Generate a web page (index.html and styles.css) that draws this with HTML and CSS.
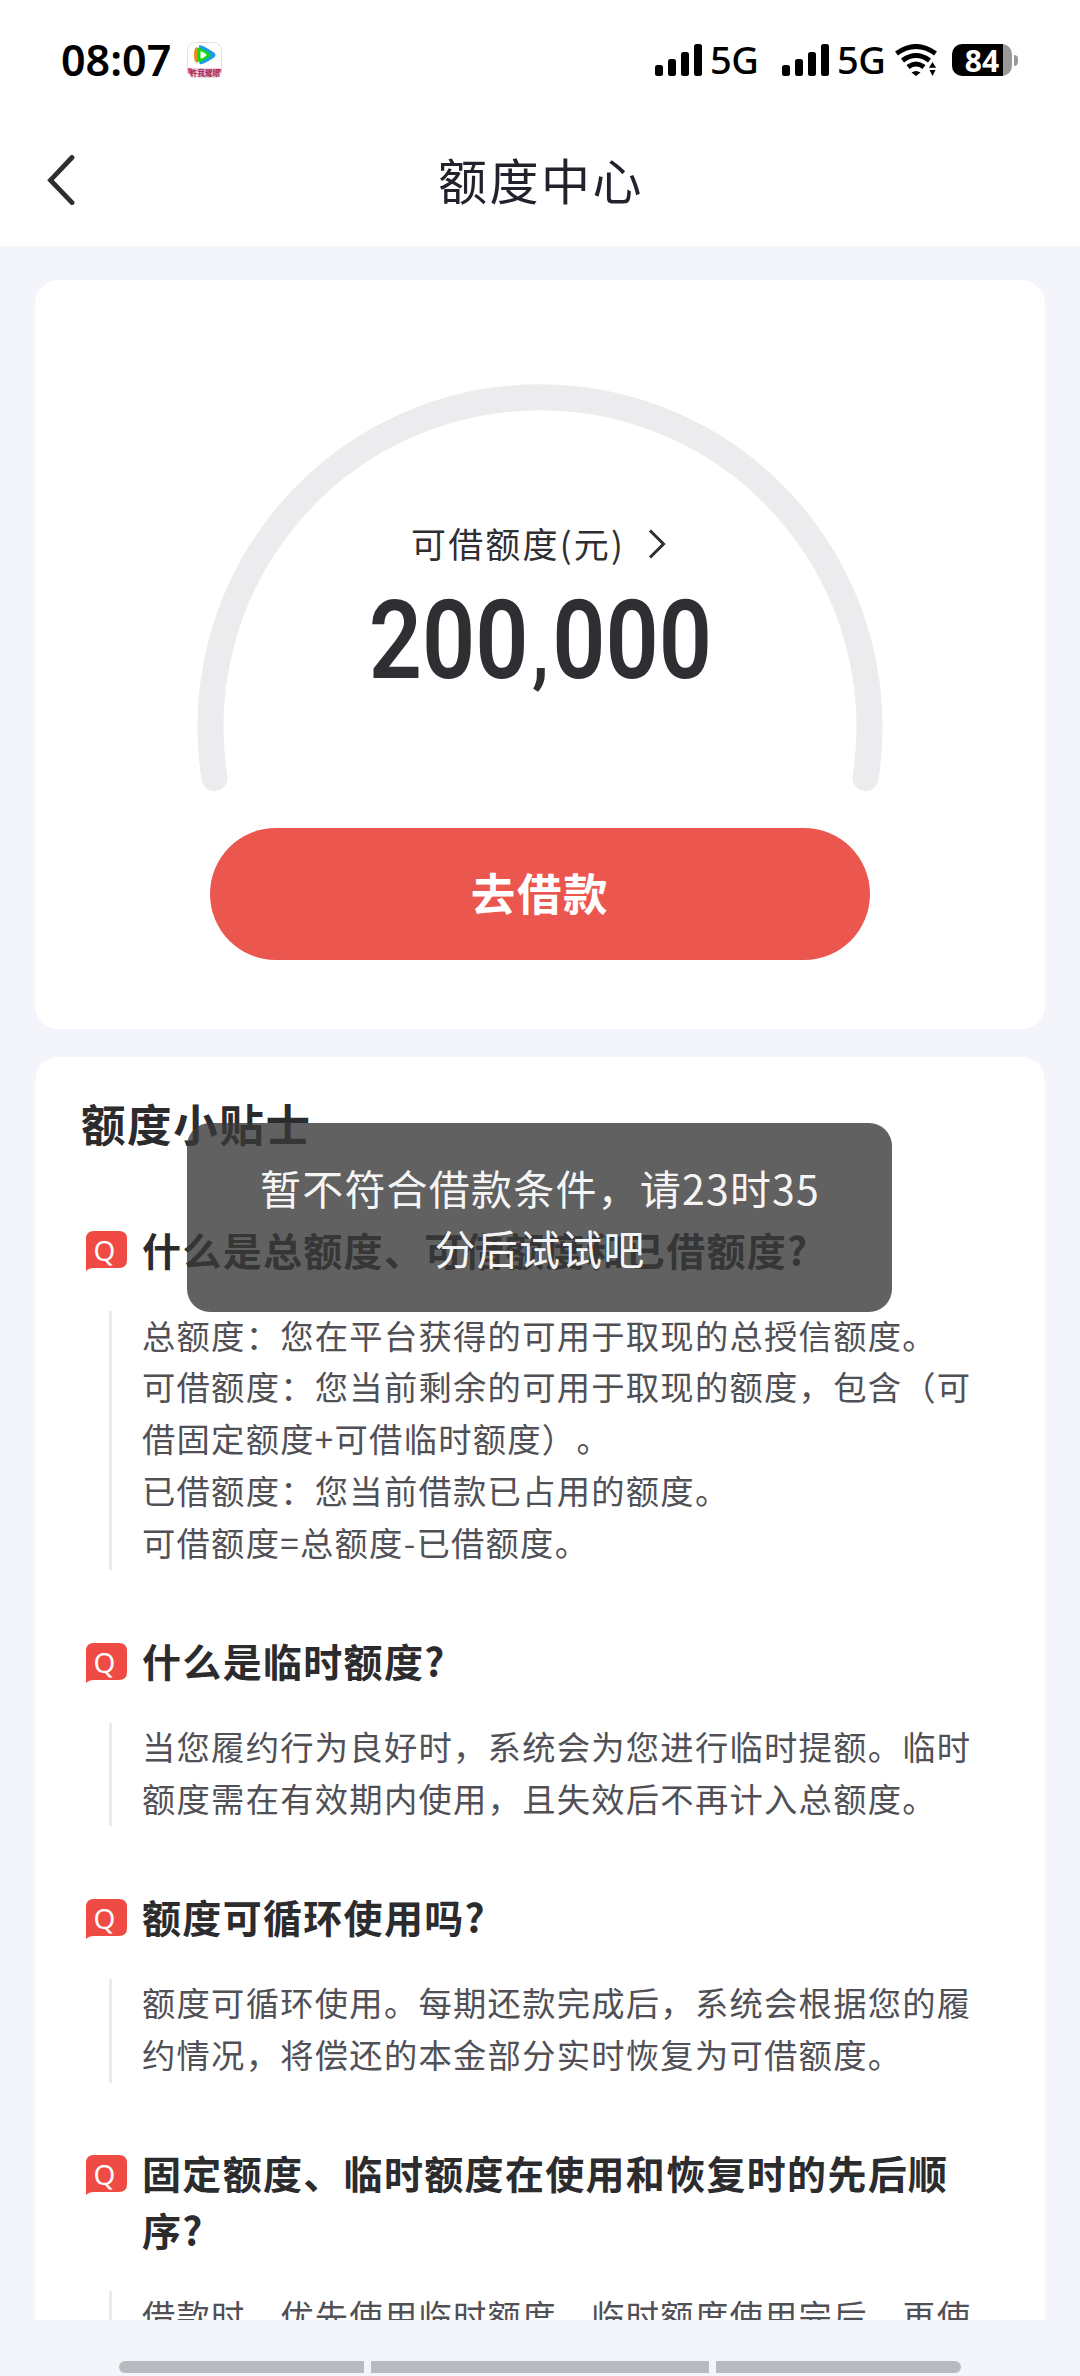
FILE: index.html
```html
<!DOCTYPE html>
<html lang="zh-CN">
<head>
<meta charset="utf-8">
<title>额度中心</title>
<link rel="stylesheet" href="styles.css">
</head>
<body>
<div class="screen">
  <header class="top">
    <div class="status">
      <span class="clock">08:07</span>
      <svg class="app-icon" width="35" height="36" viewBox="0 0 35 36">
        <defs><clipPath id="app"><rect width="35" height="36" rx="8"/></clipPath></defs>
        <g clip-path="url(#app)">
          <rect width="35" height="36" fill="#fff"/>
          <rect y="26" width="35" height="10" fill="#f3cfdb"/>
          <path d="M0 26h4l3 4-3 3-4-2zM28 27h7v4l-4-2z" fill="#d34e78"/>
        </g>
        <rect x=".5" y=".5" width="34" height="35" rx="8" fill="none" stroke="#e4e0e3"/>
        <path d="M9 5.500Q12 3.500 12 13T9.500 20.500Q7 20 7 13T9 5.500z" fill="#f58a1c"/>
        <path d="M12 3.500Q14 2 27 10.500Q30 13 27 15.500Q15 23.500 12.500 22z" fill="#1d9be6"/>
        <path d="M10.500 6Q11.500 4.500 22 11Q25 13 22 15Q12 21.500 10.800 19.500Q9.500 13 10.500 6z" fill="#16d916"/>
        <path d="M13.500 9.300Q14.500 9 19 12Q20 13 19 14Q14.500 17 13.500 16.500z" fill="#fff"/>
        <text x="18" y="33.500" class="app-label">许我耀眼</text>
      </svg>
      <span class="spring"></span>
      <svg class="signal" width="47" height="32" viewBox="0 0 47 32"><rect y="21" width="8" height="11" rx="2.500"/><rect x="13" y="15" width="8" height="17" rx="2.500"/><rect x="26" y="8" width="8" height="24" rx="2.500"/><rect x="39" width="8" height="32" rx="2.500"/></svg>
      <span class="net net-first">5G</span>
      <svg class="signal" width="47" height="32" viewBox="0 0 47 32"><rect y="21" width="8" height="11" rx="2.500"/><rect x="13" y="15" width="8" height="17" rx="2.500"/><rect x="26" y="8" width="8" height="24" rx="2.500"/><rect x="39" width="8" height="32" rx="2.500"/></svg>
      <span class="net">5G</span>
      <svg class="wifi" width="43" height="32" viewBox="0 0 43 32">
        <g fill="none" stroke="#000" stroke-width="5">
          <path d="M1.500 9.500Q21 -4.500 40.500 9.500"/>
          <path d="M7.500 16.500Q21 6.500 34.500 16.500"/>
          <path d="M13 23Q21 17 29 23"/>
        </g>
        <path d="M16.500 28.500q4.500-3 9 0L21 32z"/>
        <path d="M37.500 16.500l5 8h-10z" stroke="#fff" stroke-width="1.500"/>
        <path d="M34.500 26h6l-3 6z"/>
      </svg>
      <div class="battery"><span>84</span></div>
      <i class="battery-tip"></i>
    </div>
    <nav class="nav">
      <svg class="back" width="30" height="50" viewBox="0 0 30 50"><path d="M26 2.500L4.500 25.200l21.500 22.500" /></svg>
      <h1>额度中心</h1>
    </nav>
  </header>

  <main class="page">
    <section class="card quota">
      <div class="gauge">
        <svg class="arc" width="686" height="410" viewBox="0 0 686 410"><path d="M17.500 394A329.500 329.500 0 1 1 668.500 394"/></svg>
        <div class="quota-text">
          <div class="quota-label"><span>可借额度(元)</span><svg width="20" height="32" viewBox="0 0 20 32"><path d="M3 2.500L16.500 16 3 29.500"/></svg></div>
          <div class="amount">200<span class="comma">,</span>000</div>
        </div>
      </div>
      <button class="borrow">去借款</button>
    </section>

    <section class="card tips">
      <h2>额度小贴士</h2>
      <article>
        <h3><span class="q"><svg width="41" height="40" viewBox="0 0 41 40"><path d="M8 0h25q8 0 8 8v21q0 8-8 8H8q-5 0-8 3V8q0-8 8-8z"/></svg><b>Q</b></span><span>什么是总额度、可借额度和已借额度?</span></h3>
        <div class="answer"><p>总额度：您在平台获得的可用于取现的总授信额度。<br>可借额度：您当前剩余的可用于取现的额度，包含（可<br>借固定额度+可借临时额度）。<br>已借额度：您当前借款已占用的额度。<br>可借额度=总额度-已借额度。</p></div>
      </article>
      <article>
        <h3><span class="q"><svg width="41" height="40" viewBox="0 0 41 40"><path d="M8 0h25q8 0 8 8v21q0 8-8 8H8q-5 0-8 3V8q0-8 8-8z"/></svg><b>Q</b></span><span>什么是临时额度?</span></h3>
        <div class="answer"><p>当您履约行为良好时，系统会为您进行临时提额。临时<br>额度需在有效期内使用，且失效后不再计入总额度。</p></div>
      </article>
      <article>
        <h3><span class="q"><svg width="41" height="40" viewBox="0 0 41 40"><path d="M8 0h25q8 0 8 8v21q0 8-8 8H8q-5 0-8 3V8q0-8 8-8z"/></svg><b>Q</b></span><span>额度可循环使用吗?</span></h3>
        <div class="answer"><p>额度可循环使用。每期还款完成后，系统会根据您的履<br>约情况，将偿还的本金部分实时恢复为可借额度。</p></div>
      </article>
      <article>
        <h3><span class="q"><svg width="41" height="40" viewBox="0 0 41 40"><path d="M8 0h25q8 0 8 8v21q0 8-8 8H8q-5 0-8 3V8q0-8 8-8z"/></svg><b>Q</b></span><span>固定额度、临时额度在使用和恢复时的先后顺<br>序?</span></h3>
        <div class="answer"><p>借款时，优先使用临时额度，临时额度使用完后，再使</p></div>
      </article>
    </section>
  </main>

  <footer class="system-nav"><i></i><i class="mid"></i><i></i></footer>

  <div class="toast">暂不符合借款条件，请23时35<br>分后试试吧</div>
</div>
</body>
</html>
```

FILE: styles.css
```css
* { box-sizing: border-box; margin: 0; padding: 0; }

body {
  background: #f3f5fa;
  font-family: "Noto Sans CJK SC", sans-serif;
  color: #2e2e33;
  text-spacing-trim: space-all;
}

.screen {
  position: relative;
  display: flex;
  flex-direction: column;
  width: 1080px;
  height: 2376px;
  overflow: hidden;
}

.top { flex: none; height: 246px; background: #fff; }

/* Status bar */
.status {
  display: flex;
  align-items: center;
  height: 120px;
  padding: 0 62px 0 61px;
  color: #000;
  font-family: "Noto Sans", sans-serif;
}
.clock { width: 126px; padding-bottom: 1px; font-size: 43px; font-weight: 600; line-height: 59px; }
.app-label { font: 700 7.500px "Noto Sans CJK SC", sans-serif; fill: #a3234f; text-anchor: middle; }
.spring { flex: 1; }
.net { width: 57px; padding: 0 0 1px 8px; font-size: 38px; font-weight: 500; line-height: 59px; letter-spacing: -.500px; }
.net-first { width: 80px; }
.wifi { margin-left: 9px; }
.battery {
  display: flex;
  align-items: center;
  justify-content: center;
  width: 60px;
  height: 32px;
  margin-left: 14px;
  border-radius: 10px;
  background: linear-gradient(90deg, #000 51px, #999 51px);
  color: #fff;
  font-size: 30px;
  font-weight: 700;
}
.battery-tip { width: 4px; height: 11px; margin-left: 2px; border-radius: 0 5px 5px 0; background: #999; }

/* Title bar */
.nav { display: grid; grid-template-columns: 110px 1fr 110px; align-items: center; height: 126px; }
.back { margin: -6px 0 0 46px; fill: none; stroke: #2e2e30; stroke-width: 4.800; stroke-linecap: round; stroke-linejoin: miter; }
.nav h1 { padding: 0 0 8px 2px; font-size: 49px; font-weight: 400; letter-spacing: 2.500px; line-height: 72px; text-align: center; color: #23222c; }

.page { flex: none; height: 2074px; padding: 34px 35px 0; overflow: hidden; }
.card { border-radius: 24px; background: #fff; }

/* Quota gauge */
.quota { display: flex; flex-direction: column; align-items: center; height: 749px; margin-bottom: 28px; padding-top: 104px; }
.gauge { display: grid; width: 686px; height: 444px; }
.arc, .quota-text { grid-area: 1 / 1; }
.arc path { fill: none; stroke: #ececee; stroke-width: 26; stroke-linecap: round; }
.quota-text { display: flex; flex-direction: column; align-items: center; padding-top: 133px; }
.quota-label { display: flex; align-items: center; gap: 22px; padding-right: 2px; font-size: 35px; letter-spacing: 2.200px; line-height: 52px; }
.quota-label svg { margin-top: 2px; }
.quota-label path { fill: none; stroke: #2e2e33; stroke-width: 3; }
.amount { margin-top: 7px; font: 600 110px/130px Roboto, sans-serif; transform: scaleX(.848); }
.comma { padding: 0 4px; font-size: 84px; line-height: 1; }
.borrow {
  width: 660px;
  height: 132px;
  padding-bottom: 6px;
  border: 0;
  border-radius: 66px;
  background: #eb574f;
  color: #fff;
  font: 700 44.500px "Noto Sans CJK SC", sans-serif;
  letter-spacing: 1.600px;
}

/* Tips */
.tips { padding: 32px 46px 0; }
.tips h2 { height: 68px; margin-bottom: 65px; font-size: 44.500px; font-weight: 700; letter-spacing: 1.600px; line-height: 68px; color: #2c2c2e; }
article { margin-bottom: 63.400px; }
h3 { display: flex; font-size: 39px; font-weight: 700; letter-spacing: 1.320px; line-height: 56.450px; color: #2c2c2e; }
h3 > span:last-child { margin: -1.500px 0 1.500px; }
.q { display: grid; flex: none; width: 41px; height: 40px; margin: 9px 15px 0 5px; }
.q svg, .q b { grid-area: 1 / 1; }
.q path { fill: #ef4a43; }
.q b { padding-right: 3px; font: 400 28px/39px "Noto Sans", sans-serif; text-align: center; color: #fff; }
.answer {
  display: flex;
  margin: 32.600px 0 0 28px;
  padding-left: 30px;
  border-left: 3px solid #ebebed;
}
.answer p {
  margin: -2.500px 0 2.500px;
  font-size: 33.300px;
  letter-spacing: 1.260px;
  line-height: 51.840px;
  white-space: nowrap;
  color: #505056;
}

/* System navigation hint */
.system-nav { display: flex; gap: 7px; padding: 41px 119px 0; }
.system-nav i { width: 245px; height: 12px; background: #b9babf; }
.system-nav .mid { width: 338px; }
.system-nav i:first-child { border-radius: 6px 0 0 6px; }
.system-nav i:last-child { border-radius: 0 6px 6px 0; }

/* Toast floats over the page */
.toast {
  position: absolute;
  top: 1123px;
  left: 187px;
  width: 705px;
  height: 189px;
  padding: 34px 0 0 1px;
  border-radius: 23px;
  background: rgba(57, 57, 57, .8);
  color: rgba(255, 255, 255, .96);
  font-size: 41px;
  letter-spacing: 1.200px;
  line-height: 60px;
  text-align: center;
}
```
